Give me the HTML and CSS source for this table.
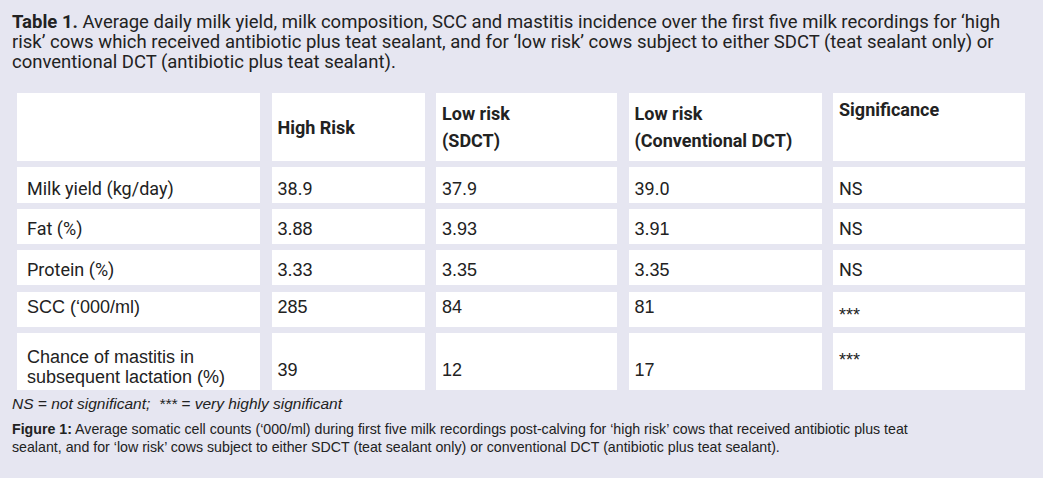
FILE: index.html
```html
<!DOCTYPE html>
<html lang="en">
<head>
<meta charset="utf-8">
<title>Table 1</title>
<link rel="stylesheet" href="styles.css">
</head>
<body>
<p class="caption"><strong>Table 1.</strong> Average daily milk yield, milk composition, SCC and mastitis incidence over the first five milk recordings for ‘high risk’ cows which received antibiotic plus teat sealant, and for ‘low risk’ cows subject to either SDCT (teat sealant only) or conventional DCT (antibiotic plus teat sealant).</p>
<div class="grid">
  <div class="cell head first"></div>
  <div class="cell head">High Risk</div>
  <div class="cell head">Low risk<br>(SDCT)</div>
  <div class="cell head">Low risk<br>(Conventional DCT)</div>
  <div class="cell head top">Significance</div>

  <div class="cell first r1">Milk yield (kg/day)</div>
  <div class="cell r1">38.9</div>
  <div class="cell r1">37.9</div>
  <div class="cell r1">39.0</div>
  <div class="cell r1">NS</div>

  <div class="cell first r2">Fat (%)</div>
  <div class="cell arial r2">3.88</div>
  <div class="cell arial r2">3.93</div>
  <div class="cell arial r2">3.91</div>
  <div class="cell r2">NS</div>

  <div class="cell first r3">Protein (%)</div>
  <div class="cell arial r3">3.33</div>
  <div class="cell arial r3">3.35</div>
  <div class="cell arial r3">3.35</div>
  <div class="cell r3">NS</div>

  <div class="cell first arial r4">SCC (‘000/ml)</div>
  <div class="cell arial r4">285</div>
  <div class="cell arial r4">84</div>
  <div class="cell arial r4">81</div>
  <div class="cell arial stars4">***</div>

  <div class="cell first arial tall">Chance of mastitis in subsequent lactation (%)</div>
  <div class="cell arial low">39</div>
  <div class="cell arial low">12</div>
  <div class="cell arial low">17</div>
  <div class="cell arial stars">***</div>
</div>
<p class="note">NS = not significant;&nbsp; *** = very highly significant</p>
<p class="figure"><strong>Figure 1:</strong> Average somatic cell counts (‘000/ml) during first five milk recordings post-calving for ‘high risk’ cows that received antibiotic plus teat sealant, and for ‘low risk’ cows subject to either SDCT (teat sealant only) or conventional DCT (antibiotic plus teat sealant).</p>
</body>
</html>
```

FILE: styles.css
```css
html, body {
  margin: 0;
  background: #e6e6f1;
}
body {
  padding: 12px 12px 0 12px;
  color: #222;
  font-family: Roboto, "Liberation Sans", Arial, sans-serif;
}
.caption {
  margin: 0;
  width: 1000px;
  font-size: 18.5px;
  line-height: 20px;
  color: #222;
}
.caption strong {
  font-weight: 700;
}
.grid {
  display: grid;
  grid-template-columns: 243px 153px 181px 193px 192px;
  grid-template-rows: 68px 35.5px 34.5px 35.5px 35px 57px;
  column-gap: 11.5px;
  row-gap: 6.3px;
  margin: 21px 0 0 5px;
}
.cell {
  background: #fff;
  padding: 0 6px;
  font-size: 18px;
  line-height: 20px;
  display: flex;
  align-items: center;
  color: #222;
}
.cell.first {
  padding-left: 10px;
}
.cell.head {
  font-weight: 700;
  line-height: 27px;
}
.cell.head.top {
  align-items: flex-start;
  padding-top: 3px;
}
.cell.arial {
  font-family: "Liberation Sans", Arial, sans-serif;
}
.cell.r1 {
  padding-top: 8px;
}
.cell.r2 {
  padding-top: 6px;
}
.cell.r3 {
  padding-top: 4px;
}
.cell.r4 {
  padding-bottom: 5px;
}
.cell.tall {
  padding-top: 11px;
}
.cell.low {
  align-items: flex-start;
  padding-top: 27px;
}
.cell.stars4 {
  padding-top: 11px;
}
.cell.stars {
  align-items: flex-start;
  padding-top: 17px;
}
.note {
  margin: 5px 0 0 0;
  font-family: "Liberation Sans", Arial, sans-serif;
  font-style: italic;
  font-size: 15.5px;
  line-height: 18px;
}
.figure {
  margin: 7px 0 0 0;
  width: 930px;
  font-family: "Liberation Sans", Arial, sans-serif;
  font-size: 14.2px;
  line-height: 18.5px;
}
```
